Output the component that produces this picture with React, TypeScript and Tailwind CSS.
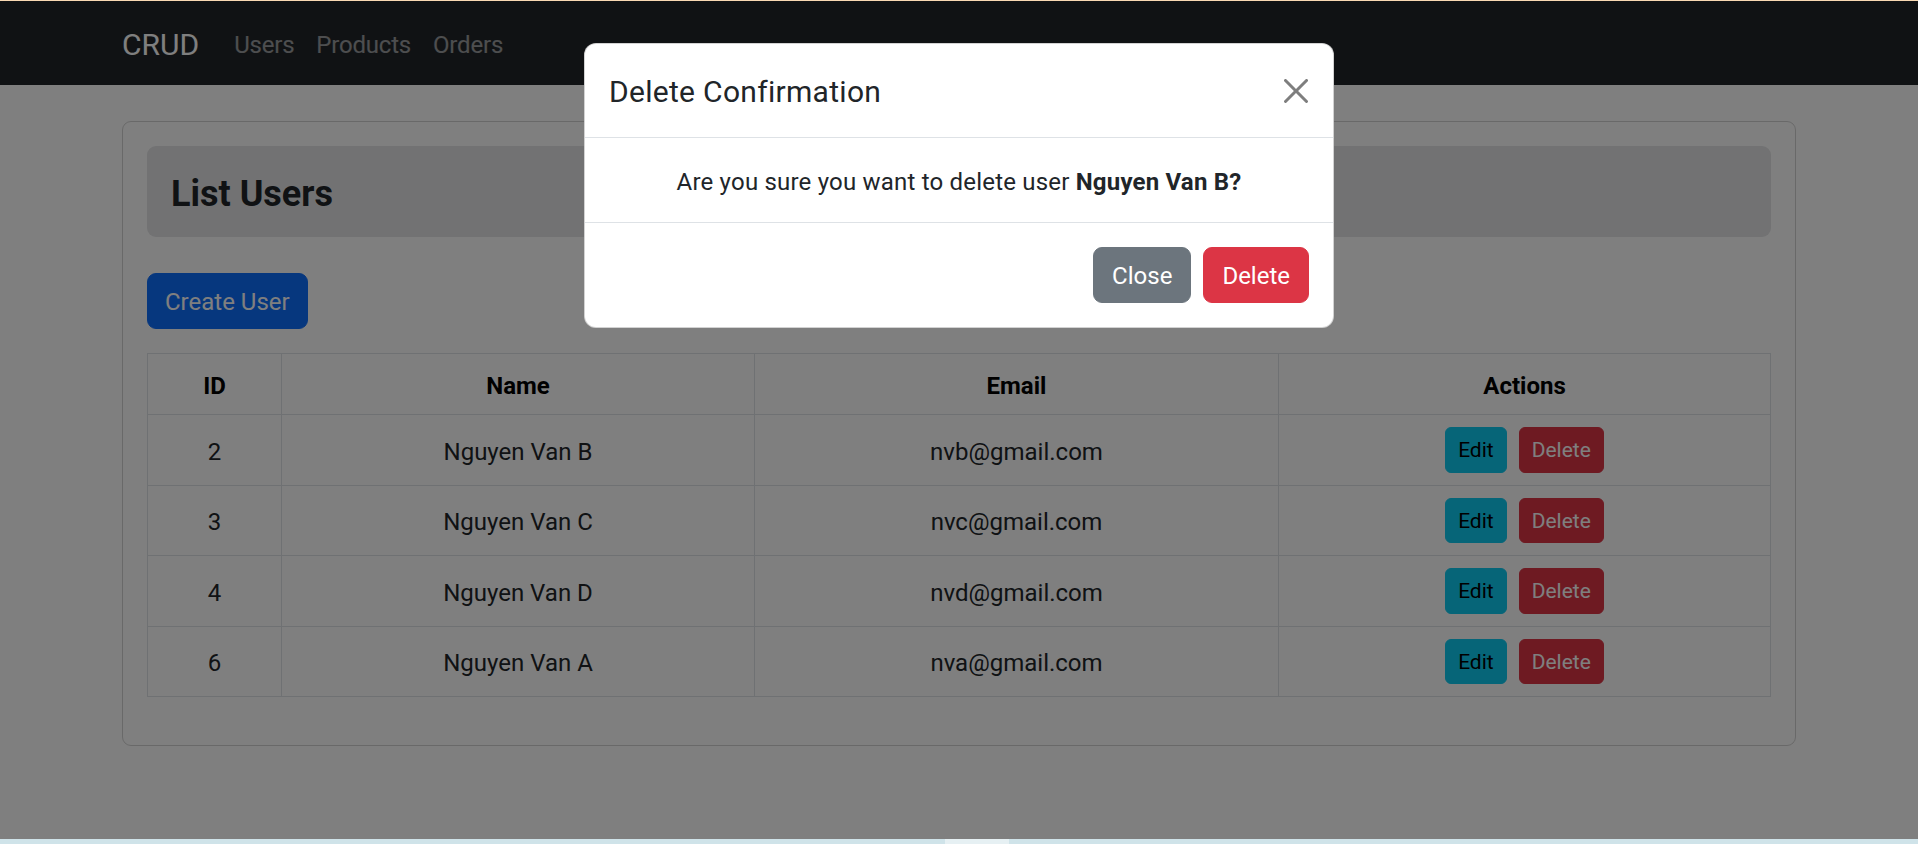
import React from 'react';

const USERS = [
  { id: 2, name: 'Nguyen Van B', email: 'nvb@gmail.com' },
  { id: 3, name: 'Nguyen Van C', email: 'nvc@gmail.com' },
  { id: 4, name: 'Nguyen Van D', email: 'nvd@gmail.com' },
  { id: 6, name: 'Nguyen Van A', email: 'nva@gmail.com' },
];

const FONT = "font-['Roboto','Liberation_Sans',sans-serif]";

const App: React.FC = () => {
  const selected = USERS[0];

  return (
    <div className={`relative flex h-[844px] w-full flex-col overflow-hidden bg-white text-[24px] leading-[36px] text-[#212529] ${FONT}`}>
      {/* browser top edge */}
      <div className="relative z-[60] h-px w-full bg-[#f9d9b3]" />

      {/* NAVBAR */}
      <nav className="bg-[#212529] py-[12px]">
        <div className="mx-auto flex w-[1710px] items-center px-[18px]">
          <a className="mr-[24px] pt-[9px] pb-[6px] text-[30px] leading-[45px] text-white">CRUD</a>
          <div className="flex">
            {['Users', 'Products', 'Orders'].map((l) => (
              <a key={l} className="px-[11px] pt-[14px] pb-[10px] tracking-[-0.2px] text-white/55">
                {l}
              </a>
            ))}
          </div>
        </div>
      </nav>

      {/* PAGE */}
      <main className="flex-1">
        <div className="mx-auto w-[1710px] px-[18px]">
          <div className="mt-[36px] rounded-[9px] border border-black/[0.175] p-[24px]">
            <div className="mb-[36px] rounded-[9px] bg-[#e4e5e6] px-[24px] pt-[27px] pb-[21px]">
              <h4 className="text-[36px] font-bold leading-[43.2px]">List Users</h4>
            </div>

            <button className="mb-[24px] rounded-[9px] border border-[#0d6efd] bg-[#0d6efd] px-[17px] pt-[10px] pb-[8px] text-white">
              Create User
            </button>

            <table className="mb-[24px] w-full table-fixed border-collapse border border-[#dee2e6] text-center">
              <thead>
                <tr>
                  <th className="w-[134px] border border-[#dee2e6] px-[12px] pt-[14px] pb-[10px] font-bold text-black">ID</th>
                  <th className="w-[473px] border border-[#dee2e6] px-[12px] pt-[14px] pb-[10px] font-bold text-black">Name</th>
                  <th className="w-[524px] border border-[#dee2e6] px-[12px] pt-[14px] pb-[10px] font-bold text-black">Email</th>
                  <th className="border border-[#dee2e6] px-[12px] pt-[14px] pb-[10px] font-bold text-black">Actions</th>
                </tr>
              </thead>
              <tbody>
                {USERS.map((u) => (
                  <tr key={u.id}>
                    <td className="border border-[#dee2e6] px-[12px] pt-[14px] pb-[10px]">{u.id}</td>
                    <td className="border border-[#dee2e6] px-[12px] pt-[14px] pb-[10px]">{u.name}</td>
                    <td className="border border-[#dee2e6] px-[12px] pt-[14px] pb-[10px]">{u.email}</td>
                    <td className="border border-[#dee2e6] p-[12px]">
                      <button className="mr-[12px] rounded-[6px] border border-[#0dcaf0] bg-[#0dcaf0] px-[12px] pt-[7px] pb-[5px] text-[21px] leading-[31.5px] text-black">
                        Edit
                      </button>
                      <button className="rounded-[6px] border border-[#dc3545] bg-[#dc3545] px-[12px] pt-[7px] pb-[5px] text-[21px] leading-[31.5px] text-white">
                        Delete
                      </button>
                    </td>
                  </tr>
                ))}
              </tbody>
            </table>
          </div>
        </div>
      </main>

      {/* taskbar strip */}
      <div className="relative z-[60] flex h-[5px] w-full bg-[#cfe3e9]">
        <div className="ml-[945px] h-full w-[64px] bg-[#e6f0f3]" />
      </div>

      {/* MODAL BACKDROP */}
      <div className="absolute inset-0 z-40 bg-black/50" />

      {/* MODAL */}
      <div className="absolute inset-x-0 top-0 z-50 pt-[43px]">
        <div className="mx-auto w-[750px] rounded-[12px] border border-black/[0.175] bg-white">
          <div className="flex items-center justify-between border-b border-[#dee2e6] p-[24px]">
            <h5 className="pt-[2px] text-[30px] font-normal leading-[43px] tracking-[0.3px]">Delete Confirmation</h5>
            <button className="-my-[12px] -mr-[5px] p-[6px] opacity-50" aria-label="Close">
              <svg viewBox="0 0 16 16" className="h-[24px] w-[24px]" fill="#000">
                <path d="M.293.293a1 1 0 0 1 1.414 0L8 6.586 14.293.293a1 1 0 1 1 1.414 1.414L9.414 8l6.293 6.293a1 1 0 0 1-1.414 1.414L8 9.414l-6.293 6.293a1 1 0 0 1-1.414-1.414L6.586 8 .293 1.707a1 1 0 0 1 0-1.414z" />
              </svg>
            </button>
          </div>
          <div className="px-[24px] pt-[26px] pb-[22px] text-center tracking-[0.2px]">
            Are you sure you want to delete user <b className="font-bold">{selected.name}?</b>
          </div>
          <div className="flex justify-end border-t border-[#dee2e6] p-[18px]">
            <button className="m-[6px] rounded-[9px] border border-[#6c757d] bg-[#6c757d] px-[18px] pt-[10px] pb-[8px] text-white">
              Close
            </button>
            <button className="m-[6px] rounded-[9px] border border-[#dc3545] bg-[#dc3545] px-[18px] pt-[10px] pb-[8px] text-white">
              Delete
            </button>
          </div>
        </div>
      </div>
    </div>
  );
};

export default App;
